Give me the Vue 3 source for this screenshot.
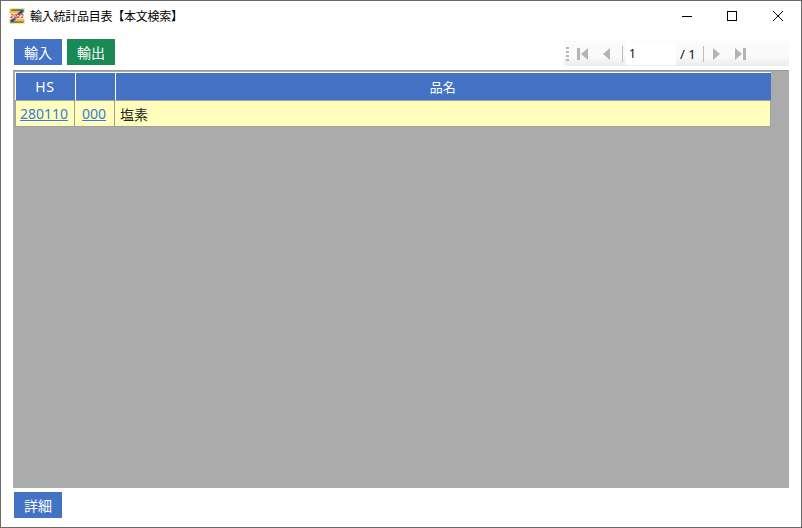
<script setup>
const rows = [{ hs: '280110', sub: '000', name: '塩素' }]
</script>

<template>
  <div class="window">
    <header class="titlebar">
      <svg class="logo" viewBox="0 0 16 16" width="16" height="16">
        <path d="M0.5 0.5H15.5V4.5L8 10.5H15.5V15.5H0.5V11.5L8 5.5H0.5Z" fill="#f2c230" />
        <path d="M2.5 1.5H14.5V3.8L4.5 13.5H14.5V14.5H1.5V12.5L11.5 2.8H2.5Z" fill="#24549f" />
        <rect x="0" y="6.4" width="16" height="4" fill="#fff" opacity="0.8" />
        <text x="8" y="10.2" text-anchor="middle" class="logo-year">2023</text>
      </svg>
      <span class="title">輸入統計品目表【本文検索】</span>
      <div class="controls">
        <svg viewBox="0 0 10 10" width="10" height="10"><path d="M0 5.5H10" stroke="#000" fill="none" /></svg>
        <svg viewBox="0 0 10 10" width="10" height="10"><rect x="0.5" y="0.5" width="9" height="9" stroke="#000" fill="none" /></svg>
        <svg class="close" viewBox="0 0 10 10" width="10" height="10"><path d="M0 0L10 10M10 0L0 10" stroke="#000" fill="none" /></svg>
      </div>
    </header>

    <div class="toolbar">
      <button class="btn blue">輸入</button>
      <button class="btn green">輸出</button>
      <div class="pager">
        <span class="grip"></span>
        <svg class="pg first" viewBox="0 0 12 14" width="12" height="14"><rect x="0" y="1" width="3" height="12" fill="#b4b4b4" /><path d="M11 1V13L4 7Z" fill="#b4b4b4" /></svg>
        <svg class="pg prev" viewBox="0 0 8 14" width="8" height="14"><path d="M7 1V13L0 7Z" fill="#b4b4b4" /></svg>
        <span class="sep"></span>
        <span class="page-input">1</span>
        <span class="total">/ 1</span>
        <span class="sep"></span>
        <svg class="pg next" viewBox="0 0 8 14" width="8" height="14"><path d="M1 1V13L8 7Z" fill="#b4b4b4" /></svg>
        <svg class="pg last" viewBox="0 0 12 14" width="12" height="14"><path d="M1 1V13L8 7Z" fill="#b4b4b4" /><rect x="9" y="1" width="3" height="12" fill="#b4b4b4" /></svg>
      </div>
    </div>

    <main class="grid-area">
      <table class="grid">
        <colgroup>
          <col class="c-hs" />
          <col class="c-sub" />
          <col />
        </colgroup>
        <thead>
          <tr>
            <th class="hs-head">HS</th>
            <th></th>
            <th>品名</th>
          </tr>
        </thead>
        <tbody>
          <tr v-for="row in rows" :key="row.hs">
            <td class="cell-hs"><a href="#" @click.prevent>{{ row.hs }}</a></td>
            <td class="cell-sub"><a href="#" @click.prevent>{{ row.sub }}</a></td>
            <td class="cell-name">{{ row.name }}</td>
          </tr>
        </tbody>
      </table>
    </main>

    <footer class="footer">
      <button class="btn blue">詳細</button>
    </footer>
  </div>
</template>

<style>
html, body { margin: 0; padding: 0; background: #fff; }
</style>

<style scoped>
.window {
  box-sizing: border-box;
  width: 802px;
  height: 528px;
  display: flex;
  flex-direction: column;
  background: #fff;
  border: 1px solid #6b6b6b;
  font-family: "Noto Sans", "Noto Sans CJK JP", sans-serif;
  color: #000;
  overflow: hidden;
}
.titlebar {
  display: flex;
  align-items: center;
  height: 29px;
  padding-left: 8px;
  flex: none;
}
.logo { flex: none; }
.logo-year { font: italic 700 6px "Liberation Sans", sans-serif; fill: #e0141c; }
.title {
  margin-left: 5px;
  font-size: 12px;
  letter-spacing: -0.25px;
  font-family: "Noto Sans CJK JP", sans-serif;
}
.controls {
  margin-left: auto;
  display: flex;
  align-items: center;
  gap: 35px;
  padding-right: 18px;
}
.controls svg { display: block; }
.controls .close { margin-left: 1px; }
.toolbar {
  display: flex;
  align-items: flex-start;
  height: 40px;
  padding: 9px 12px 0 13px;
  box-sizing: border-box;
  gap: 5px;
  flex: none;
}
.btn {
  width: 48px;
  height: 26px;
  padding: 0;
  border: 0;
  color: #fff;
  font-size: 14px;
  font-family: "Noto Sans CJK JP", sans-serif;
  line-height: 26px;
}
.blue { background: #4472c4; }
.green { background: #1a8a54; }
.pager {
  margin-left: auto;
  margin-top: 2px;
  width: 225px;
  height: 25px;
  box-sizing: border-box;
  display: flex;
  align-items: center;
  padding-left: 2px;
  border-radius: 3px;
  background: linear-gradient(#fbfbfb, #fafafa 60%, #ececec);
  font-size: 12px;
}
.grip {
  width: 3px;
  height: 14px;
  background: repeating-linear-gradient(#b8b8b8 0 2px, transparent 2px 4px);
}
.pg { flex: none; }
.first { margin-left: 8px; }
.prev { margin-left: 14px; }
.sep { width: 1px; height: 16px; background: #bdbdbd; flex: none; }
.prev + .sep { margin-left: 11px; }
.page-input {
  width: 50px;
  height: 23px;
  margin-left: 3px;
  padding-left: 3px;
  box-sizing: border-box;
  background: #fff;
  line-height: 23px;
  color: #111;
}
.total { margin-left: 4px; width: 23px; color: #111; font-size: 13px; }
.next { margin-left: 8px; }
.last { margin-left: 14px; }
.grid-area {
  flex: 1;
  margin: 0 12px;
  padding: 1px 18px 0 2px;
  background: #ababab;
  border-top: 1px solid #9a9a9a;
  min-height: 0;
}
.grid {
  width: 756px;
  table-layout: fixed;
  border-collapse: collapse;
  font-size: 14px;
}
.c-hs { width: 59px; }
.c-sub { width: 40px; }
.grid th {
  height: 27px;
  padding: 0;
  background: #4472c4;
  color: #fff;
  font-weight: 400;
  font-size: 13px;
  border-left: 1px solid #4472c4;
  border-top: 1px solid #fff;
  border-bottom: 1px solid #a0a0a0;
  box-shadow: inset 1px 0 0 #fff;
}
.grid th:first-child { border-left-color: #fff; box-shadow: none; }
.grid .hs-head { font-size: 14px; letter-spacing: 0.6px; }
.grid td {
  height: 25px;
  padding: 0 5px;
  background: #ffffbb;
  border: 1px solid #a0a0a0;
  color: #222;
}
.grid .cell-hs { padding-left: 4px; }
.grid .cell-sub { padding-left: 7px; }
.grid .cell-name { padding-left: 5px; }
.grid a { color: #3b78d8; }
.footer {
  height: 39px;
  flex: none;
  padding: 4px 0 0 13px;
  box-sizing: border-box;
}
</style>
